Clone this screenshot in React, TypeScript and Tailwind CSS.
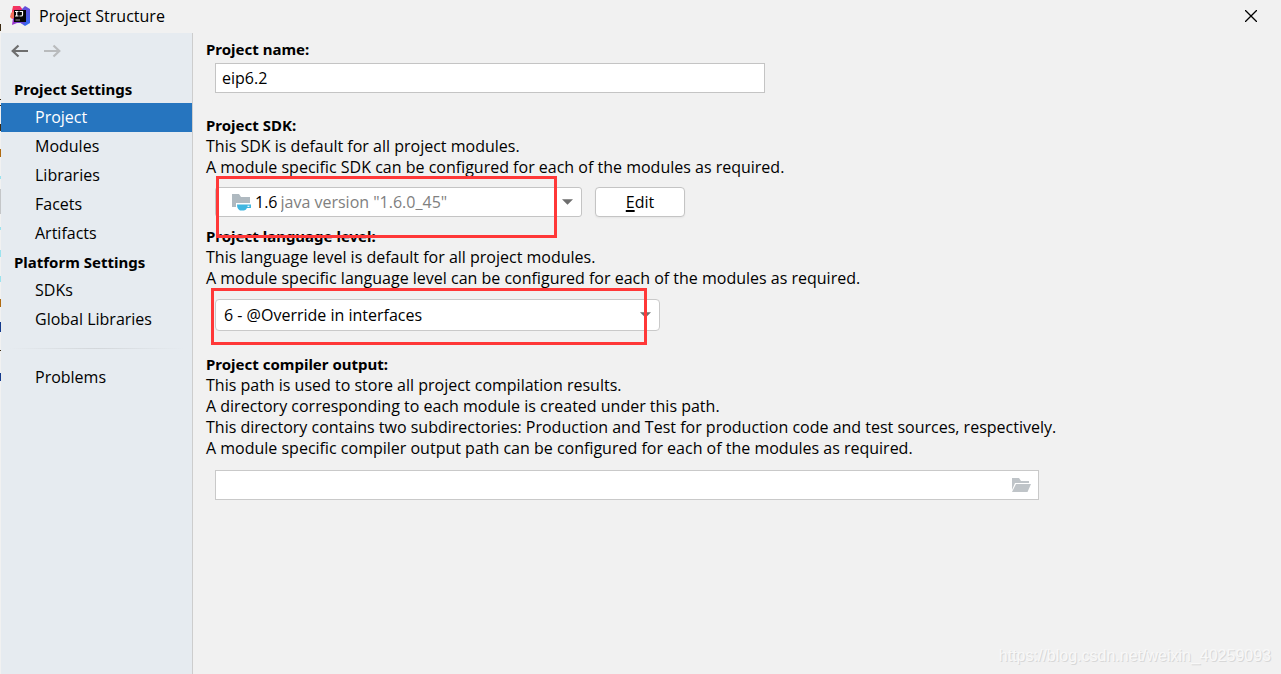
import type { ReactNode } from 'react';

function Logo() {
  return (
    <svg className="h-5 w-5 shrink-0" viewBox="0 0 20 20" aria-hidden="true">
      <defs>
        <linearGradient id="pink" x1="0" y1="0" x2="1" y2="1">
          <stop offset="0" stopColor="#fb3a4e" />
          <stop offset="1" stopColor="#d8219a" />
        </linearGradient>
        <linearGradient id="blue" x1="0" y1="0" x2="0" y2="1">
          <stop offset="0" stopColor="#6a4bd8" />
          <stop offset="1" stopColor="#2f6df2" />
        </linearGradient>
        <linearGradient id="violet" x1="0" y1="0" x2="1" y2="0">
          <stop offset="0" stopColor="#a033c9" />
          <stop offset="1" stopColor="#5a4fe0" />
        </linearGradient>
      </defs>
      <path d="M3 0 10 0l3 4-3 9-8-3L2 5z" fill="url(#pink)" />
      <path d="M1 7l4-3 1 8-4 1-2-2z" fill="#f2705a" />
      <path d="M12 3 15 0l5 3v14l-5 3-6-4z" fill="url(#blue)" />
      <path d="M3 12h11l1 7-4-2-4 0-5 2z" fill="url(#violet)" />
      <rect x="4" y="4" width="12" height="12" fill="#050505" />
      <path d="M5 5.500h3.500M6.700 5.500v4.500M5 10h3.500" stroke="#fff" strokeWidth="1.2" fill="none" />
      <path d="M9.500 5.500h3v3.200q0 1.300-1.300 1.300h-1.700" stroke="#fff" strokeWidth="1.2" fill="none" />
      <path d="M5.500 14h4.500" stroke="#aaa" strokeWidth="0.9" />
    </svg>
  );
}

function Arrow({ flip }: { flip?: boolean }) {
  return (
    <svg className="h-4 w-[17px]" viewBox="0 0 17 16" fill="none" stroke="currentColor" strokeWidth="2.200" aria-hidden="true">
      {flip ? <path d="M0 8h15.500M9.500 2.500 15.300 8l-5.800 5.500" /> : <path d="M17 8H1.500M7.500 2.500 1.700 8l5.800 5.500" />}
    </svg>
  );
}

function Caret() {
  return (
    <svg className="h-[6px] w-[11px]" viewBox="0 0 12 6" aria-hidden="true">
      <path d="M0 0h12L6 6z" fill="#6e6e6e" />
    </svg>
  );
}

function SdkIcon() {
  return (
    <svg className="ml-4 h-[18px] w-5 shrink-0" viewBox="0 0 20 18" aria-hidden="true">
      <path d="M0 1h7l2 3h9v10H0z" fill="#afb9c0" />
      <path d="M4 10h16v5h-3l-2 3H7l-3-3z" fill="#fff" />
      <path d="M5 11.500h14v3.500H15q-1 2-3 2.500H8Q5 16 5 11.500z" fill="#40b6e0" />
      <path d="M15.500 12.700h1.900v1.200h-1.900z" fill="#fff" />
    </svg>
  );
}

function FolderIcon() {
  return (
    <svg className="h-[15px] w-[19px]" viewBox="0 0 19 15" aria-hidden="true">
      <path d="M0 0h7l2 3h8v2H3L0 12z" fill="#bfc4c8" />
      <path d="M4 6h15l-3.500 8H0z" fill="#bfc4c8" />
    </svg>
  );
}

/** Sliver of the editor window that shows behind the dialog. */
function EditorEdge() {
  return (
    <svg className="w-px shrink-0" viewBox="0 0 1 674" preserveAspectRatio="xMidYMin slice" aria-hidden="true">
      <path d="M0 0h1v674H0z" fill="#f1f1f1" />
      <path d="M0 24h1v7H0zM0 99h1v1H0zM0 105h1v1H0zM0 124h1v7H0zM0 350h1v1H0z" fill="#3c2a10" />
      <path d="M0 149h1v8H0zM0 299h1v8H0z" fill="#b06a10" />
      <path d="M0 176h1v3H0zM0 227h1v3H0zM0 250h1v7H0zM0 276h1v6H0z" fill="#9be3ee" />
      <path d="M0 189h1v25H0z" fill="#c4c6c8" />
      <path d="M0 322h1v10H0zM0 373h1v8H0z" fill="#143a8c" />
    </svg>
  );
}

function NavItem({ children, active }: { children: ReactNode; active?: boolean }) {
  return (
    <li>
      <a
        href="#"
        aria-current={active ? 'page' : undefined}
        className={active ? 'block bg-[#2675bf] pl-[34px] leading-[29px] text-white' : 'block pl-[34px] leading-[29px]'}
      >
        {children}
      </a>
    </li>
  );
}

function NavHeading({ children }: { children: ReactNode }) {
  return <h2 className="pl-[13px] font-['Noto_Sans',sans-serif] text-[15px] font-bold leading-7">{children}</h2>;
}

function FieldLabel({ htmlFor, children }: { htmlFor: string; children: ReactNode }) {
  return (
    <label htmlFor={htmlFor} className="block font-['Noto_Sans',sans-serif] text-[15px] font-bold leading-[21px]">
      {children}
    </label>
  );
}

export default function App() {
  return (
    <div className="flex min-h-screen bg-[#f1f1f1] font-['Open_Sans','Noto_Sans',sans-serif] text-[16px] leading-[21px] text-black">
      <EditorEdge />
      <div className="flex min-w-0 flex-1 flex-col">
        <header className="flex h-[33px] items-center pb-px pl-[9px] pr-6">
          <Logo />
          <h1 className="ml-[9px] flex-1">Project Structure</h1>
          <button type="button" aria-label="Close" className="flex h-3 w-3 items-center justify-center">
            <svg className="h-3 w-3" viewBox="0 0 12 12" stroke="#000" strokeWidth="1.3" aria-hidden="true">
              <path d="M0 0l12 12M12 0 0 12" />
            </svg>
          </button>
        </header>

        <div className="flex flex-1">
          <nav className="w-48 shrink-0 border-r border-[#cdcdcd] bg-[#e6ebf0]">
            <div className="flex h-[42px] items-start gap-4 pl-[10px] pt-[10px]">
              <button type="button" aria-label="Back" className="text-[#6e6e6e]"><Arrow /></button>
              <button type="button" aria-label="Forward" disabled className="text-[#b9bbbd]"><Arrow flip /></button>
            </div>
            <NavHeading>Project Settings</NavHeading>
            <ul>
              <NavItem active>Project</NavItem>
              <NavItem>Modules</NavItem>
              <NavItem>Libraries</NavItem>
              <NavItem>Facets</NavItem>
              <NavItem>Artifacts</NavItem>
            </ul>
            <NavHeading>Platform Settings</NavHeading>
            <ul>
              <NavItem>SDKs</NavItem>
              <NavItem>Global Libraries</NavItem>
            </ul>
            <div className="mx-2 my-[14px] h-px bg-linear-to-r from-transparent via-[#d3d7db] to-transparent" />
            <ul>
              <NavItem>Problems</NavItem>
            </ul>
          </nav>

          <main className="min-w-0 flex-1 px-[13px] pt-[6px]">
            <section>
              <FieldLabel htmlFor="name">Project name:</FieldLabel>
              <input
                id="name"
                defaultValue="eip6.2"
                className="ml-[9px] mt-[3px] block h-[30px] w-full max-w-[550px] border border-[#c4c4c4] bg-white px-[6px] outline-none"
              />
            </section>

            <section className="mt-[22px]">
              <FieldLabel htmlFor="sdk">Project SDK:</FieldLabel>
              <p>This SDK is default for all project modules.</p>
              <p>A module specific SDK can be configured for each of the modules as required.</p>
              <div className="relative ml-[9px] mt-[9px] flex gap-[13px]">
                <div className="flex h-[30px] w-full max-w-[367px] items-center rounded-[3px] border border-[#c4c4c4] bg-white pr-2">
                  <SdkIcon />
                  <span className="ml-[3px]">1.6</span>
                  <select id="sdk" className="h-full min-w-0 flex-1 appearance-none bg-transparent pl-[3px] text-[#808080] outline-none">
                    <option>java version "1.6.0_45"</option>
                  </select>
                  <Caret />
                </div>
                <button type="button" className="h-[30px] w-[90px] rounded-[4px] border border-[#c4c4c4] bg-white shadow-xs">
                  <span className="underline decoration-2 underline-offset-2">E</span>dit
                </button>
                <div className="pointer-events-none absolute -top-[11px] left-px z-10 h-[62px] w-[341px] border-3 border-[#ff3838]" />
              </div>
            </section>

            <section className="mt-[9px]">
              <FieldLabel htmlFor="level">Project language level:</FieldLabel>
              <p>This language level is default for all project modules.</p>
              <p>A module specific language level can be configured for each of the modules as required.</p>
              <div className="relative ml-[9px] mt-[10px] max-w-[445px]">
                <select id="level" className="block h-8 w-full appearance-none rounded-[4px] border border-[#c9c9c9] bg-white px-2 outline-none">
                  <option>6 - @Override in interfaces</option>
                </select>
                <span className="pointer-events-none absolute inset-y-0 right-[9px] flex items-center">
                  <Caret />
                </span>
                <div className="pointer-events-none absolute -left-1 -top-[11px] z-10 h-[57px] w-[436px] border-3 border-[#ff3838]" />
              </div>
            </section>

            <section className="mt-[23px]">
              <FieldLabel htmlFor="output">Project compiler output:</FieldLabel>
              <p>This path is used to store all project compilation results.</p>
              <p>A directory corresponding to each module is created under this path.</p>
              <p>This directory contains two subdirectories: Production and Test for production code and test sources, respectively.</p>
              <p>A module specific compiler output path can be configured for each of the modules as required.</p>
              <div className="ml-[9px] mt-[11px] flex h-[30px] max-w-[824px] items-center border border-[#c9c9c9] bg-white">
                <input id="output" className="h-full min-w-0 flex-1 px-[6px] outline-none" />
                <button type="button" aria-label="Browse" className="mr-[7px]"><FolderIcon /></button>
              </div>
            </section>
          </main>
        </div>
      </div>
      <p className="pointer-events-none absolute bottom-2 right-[10px] font-['Liberation_Sans',sans-serif] text-[16px] text-[#f8f8f8] [text-shadow:1px_1px_0_#d8d8d8]">
        https://blog.csdn.net/weixin_40259093
      </p>
    </div>
  );
}
